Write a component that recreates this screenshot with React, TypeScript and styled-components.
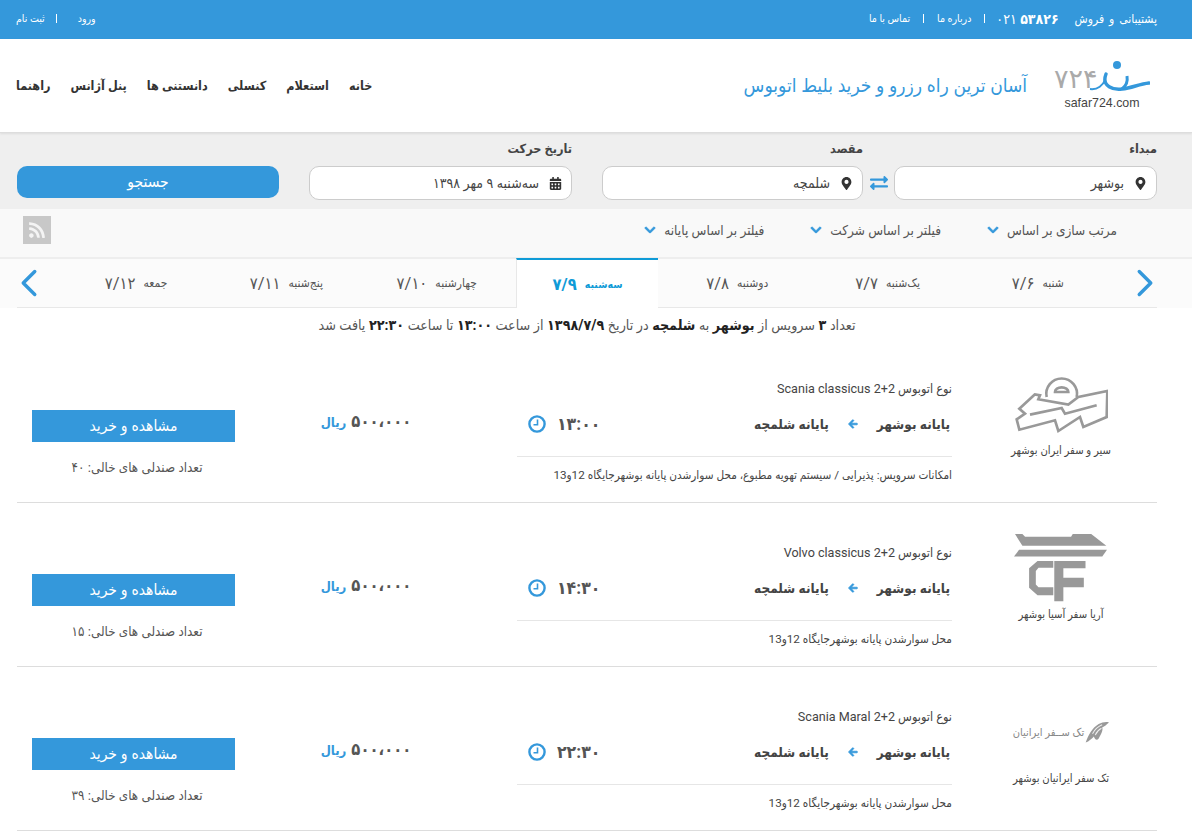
import React from "react";
import styled, { createGlobalStyle } from "styled-components";
import { FaCalendarAlt, FaChevronDown, FaExchangeAlt, FaMapMarkerAlt, FaRss, FaArrowLeft } from "react-icons/fa";
import { ChevronLeft, ChevronRight } from "lucide-react";

const BLUE = "#3498db";

const GlobalStyle = createGlobalStyle`
  * { box-sizing: border-box; }
  html, body { margin: 0; padding: 0; background: #fff; }
  body {
    font-family: Roboto, "DejaVu Sans Condensed", "DejaVu Sans", sans-serif;
    color: #555;
    overflow: hidden;
  }
`;

const Page = styled.div`
  direction: rtl;
  width: 1192px;
`;

const TopBar = styled.div`
  height: 39px;
  background: ${BLUE};
  color: #fff;
  font-size: 10.5px;
  display: flex;
  align-items: center;
  justify-content: space-between;
  padding: 0 35px 2px 16px;
`;

const TopGroup = styled.div`
  display: flex;
  align-items: center;
`;

const TopLink = styled.span`
  white-space: nowrap;
`;

const Support = styled.span`
  font-size: 12px;
  white-space: nowrap;
  word-spacing: 2px;
`;

const Phone = styled.span`
  direction: ltr;
  font-size: 14px;
  margin: 0 16px 0 -2px;
  white-space: nowrap;
  b { font-weight: 700; }
`;

const TopSep = styled.span<{ $wide?: boolean }>`
  width: 1px;
  height: 9px;
  background: #fff;
  margin: ${(p) => (p.$wide ? "0 21px 0 11px" : "0 13px")};
`;

const Header = styled.header`
  height: 94px;
  display: flex;
  align-items: center;
  padding: 0 42px 0 16px;
  border-bottom: 1px solid #ddd;
  box-shadow: 0 1px 2px rgba(0, 0, 0, 0.08);
  position: relative;
`;

const LogoBox = styled.div`
  width: 96px;
  height: 58px;
  display: flex;
  flex-direction: column;
  align-items: center;
  flex: none;
`;

const LogoText = styled.span`
  direction: ltr;
  font-family: "Liberation Sans", sans-serif;
  font-size: 12.4px;
  line-height: 14px;
  color: #444;
  margin-top: -5px;
`;

const Tagline = styled.div`
  margin-right: 27px;
  font-size: 19px;
  color: ${BLUE};
  white-space: nowrap;
`;

const Nav = styled.nav`
  margin-right: auto;
  display: flex;
  gap: 20px;
  font-size: 12.5px;
  font-weight: 700;
  color: #333;
  white-space: nowrap;
`;

const SearchBar = styled.section`
  height: 76px;
  background: #efefef;
  padding: 8px 35px 0 17px;
  display: grid;
  grid-template-columns: 263px 31px 261px 30px 263px 30px 262px;
  grid-template-rows: 25px 34px;
`;

const FieldLabel = styled.label<{ $col: number }>`
  grid-column: ${(p) => p.$col};
  grid-row: 1;
  font-size: 12.6px;
  font-weight: 700;
  color: #444;
  line-height: 16px;
`;

const Field = styled.div<{ $col: number }>`
  grid-column: ${(p) => p.$col};
  grid-row: 2;
  height: 34px;
  background: #fff;
  border: 1px solid #ccc;
  border-radius: 10px;
  display: flex;
  align-items: center;
  gap: 10px;
  padding: 0 9px;
  font-size: 14px;
  color: #444;
  svg { color: #333; font-size: 13px; flex: none; }
`;

const Swap = styled.div`
  grid-column: 2;
  grid-row: 2;
  display: flex;
  align-items: center;
  justify-content: center;
  color: ${BLUE};
  font-size: 18px;
`;

const SearchButton = styled.button`
  grid-column: 7;
  grid-row: 2;
  height: 32px;
  border: 0;
  border-radius: 10px;
  background: ${BLUE};
  color: #fff;
  font: inherit;
  font-size: 15.5px;
`;

const FilterBar = styled.section`
  height: 48px;
  background: #f9f9f9;
  display: flex;
  align-items: center;
  padding: 0 75px 0 23px;
  gap: 46px;
`;

const Filter = styled.div`
  display: flex;
  align-items: center;
  gap: 8px;
  font-size: 13.5px;
  color: #555;
  white-space: nowrap;
  margin-bottom: 6px;
  svg { color: ${BLUE}; font-size: 12px; stroke: currentColor; stroke-width: 30; }
`;

const RssBox = styled.div`
  margin-right: auto;
  width: 28px;
  height: 28px;
  margin-bottom: 6px;
  background: #c8c8c8;
  color: #f4f4f4;
  font-size: 18px;
  display: flex;
  align-items: center;
  justify-content: center;
`;

const TabsWrap = styled.section`
  height: 51px;
  border-top: 2px solid #eee;
  background: #fbfbfb;
  padding: 0 35px 0 17px;
`;

const TabsRow = styled.div`
  height: 49px;
  display: flex;
  align-items: stretch;
  border-bottom: 1px solid #e8e8e8;
`;

const ArrowBtn = styled.div`
  width: 24px;
  flex: none;
  display: flex;
  align-items: center;
  justify-content: center;
  color: ${BLUE};
  svg { flex: none; }
`;

const TabList = styled.div`
  flex: 1;
  display: grid;
  grid-template-columns: repeat(7, 1fr);
  margin: 0 20px;
`;

const Tab = styled.div<{ $active?: boolean }>`
  display: flex;
  align-items: center;
  justify-content: center;
  gap: 8px;
  white-space: nowrap;
  font-size: 12px;
  color: #555;
  ${(p) =>
    p.$active &&
    `
    margin: -1px 4px -1px 4px;
    background: #fff;
    border-top: 2px solid #0f9bd7;
    border-left: 1px solid #e8e8e8;
    color: #0f9bd7;
    font-weight: 700;
    font-size: 10.5px;
  `}
`;

const TabDate = styled.span<{ $active?: boolean }>`
  font-size: 16.5px;
  font-weight: ${(p) => (p.$active ? 700 : 400)};
`;

const Container = styled.main`
  margin: 0 35px 0 17px;
`;

const Summary = styled.p`
  margin: 0;
  height: 31px;
  padding-top: 8px;
  line-height: 18px;
  text-align: center;
  font-size: 14.2px;
  color: #555;
  b { color: #222; }
`;

const Row = styled.article`
  height: 164px;
  display: grid;
  grid-template-columns: 205px 435px 282px 218px;
  align-items: start;
  border-bottom: 1px solid #ddd;
`;

const CompanyCol = styled.div`
  padding-top: 34px;
  padding-left: 13px;
  display: flex;
  flex-direction: column;
  align-items: center;
  gap: 9px;
  font-size: 11.2px;
  color: #444;
  white-space: nowrap;
`;

const LogoSlot = styled.div`
  height: 62px;
  display: flex;
  align-items: center;
  justify-content: center;
`;

const SmallLogo = styled.div`
  display: flex;
  align-items: center;
  gap: 1px;
  color: #888;
  font-size: 11px;
  height: 62px;
`;

const InfoCol = styled.div`
  padding-top: 42px;
`;

const BusType = styled.div`
  font-size: 12.6px;
  line-height: 16px;
  color: #444;
`;

const RouteLine = styled.div`
  height: 60px;
  padding-top: 16px;
  display: flex;
  justify-content: space-between;
  align-items: flex-start;
  border-bottom: 1px solid #e6e6e6;
`;

const Route = styled.div`
  display: flex;
  align-items: center;
  gap: 19px;
  padding-right: 2px;
  font-size: 13.5px;
  line-height: 22px;
  font-weight: 700;
  color: #444;
  white-space: nowrap;
  svg { color: ${BLUE}; font-size: 10px; stroke: currentColor; stroke-width: 40; }
`;

const TimeBox = styled.div`
  display: flex;
  align-items: center;
  gap: 11px;
  padding-left: 11px;
  font-size: 17.5px;
  line-height: 22px;
  font-weight: 700;
  color: #555;
`;

const Facilities = styled.div`
  padding-top: 10px;
  font-size: 11.7px;
  line-height: 16px;
  color: #444;
`;

const PriceCol = styled.div`
  padding: 73px 20px 0 0;
  display: flex;
  justify-content: center;
  align-items: baseline;
  gap: 5px;
  font-size: 16.5px;
  font-weight: 700;
  color: #555;
  white-space: nowrap;
`;

const Rial = styled.span`
  color: ${BLUE};
  font-size: 13px;
`;

const BuyCol = styled.div`
  padding: 71px 0 0 15px;
  display: flex;
  flex-direction: column;
  align-items: center;
`;

const BuyButton = styled.button`
  width: 203px;
  height: 32px;
  border: 0;
  background: ${BLUE};
  color: #fff;
  font: inherit;
  font-size: 15.5px;
`;

const Seats = styled.div`
  margin-top: 17px;
  padding-left: 7px;
  font-size: 13.3px;
  line-height: 18px;
  color: #555;
`;

const ClockIcon = () => (
  <svg width="18" height="18" viewBox="0 0 18 18" fill="none" stroke={BLUE}>
    <circle cx="9" cy="9" r="7.6" strokeWidth="2.4" />
    <path d="M9.5 4.5 V9.8 H5.5" strokeWidth="1.6" />
  </svg>
);

const SeirLogo = () => (
  <svg width="94" height="59" viewBox="72 39 282 177" fill="none" stroke="#999" strokeWidth="8">
    <path d="M135 97 L88 140 L105 155 L80 172 L88 203 L195 175 L205 207 L270 165 L280 195 L350 165 L352 87 L265 105 L235 128 L145 112 L150 100 Z" />
    <path d="M120 158 L215 138 L225 155 L320 130" />
    <path d="M170 105 A46 46 0 1 1 260 105" />
    <path d="M195 90 a20 14 0 0 1 40 0 Z" />
  </svg>
);

const AryaLogo = () => (
  <svg width="94" height="68" viewBox="75 40 280 202" fill="#999">
    <path d="M78 40 H100 L108 48 H245 L250 40 H305 L350 75 H100 Z" />
    <path d="M90 87 H352 L338 107 H75 Z" />
    <path d="M145 120 H192 V140 H148 L140 150 V190 L148 198 H192 V222 H145 L120 200 V142 Z" />
    <path d="M195 120 H288 V142 H222 V170 H283 V198 H222 V240 H195 Z" />
  </svg>
);

const BirdLogo = () => (
  <svg width="24" height="23" viewBox="0 0 70 65">
    <path d="M2 62 C10 40 20 20 40 8 C50 3 60 1 70 3 C62 10 58 14 50 18 C54 24 46 40 40 50 C34 58 28 52 26 44 C20 50 12 58 2 62 Z" fill="#999" />
    <path d="M22 36 C28 24 36 16 50 10 M30 40 C34 30 40 24 48 20" fill="none" stroke="#eee" strokeWidth="3" />
  </svg>
);

const SiteLogo = () => (
  <svg width="96" height="44" viewBox="0 0 96 44">
    <text x="0" y="31" fontSize="27" fill="#aaa" fontFamily="'DejaVu Sans', sans-serif" direction="ltr">۷۲۴</text>
    <circle cx="63" cy="8" r="4" fill={BLUE} />
    <path d="M52 17 C47 30 60 33 68 32 C78 31 85 27 95 26" fill="none" stroke={BLUE} strokeWidth="3.4" strokeLinecap="round" />
    <path d="M73 19 C74 25 72 29 68 32" fill="none" stroke={BLUE} strokeWidth="3" />
    <path d="M36 32 C44 33 49 28 51 23" fill="none" stroke={BLUE} strokeWidth="2" />
  </svg>
);

const tabs = [
  { day: "شنبه", date: "۷/۶" },
  { day: "یک‌شنبه", date: "۷/۷" },
  { day: "دوشنبه", date: "۷/۸" },
  { day: "سه‌شنبه", date: "۷/۹", active: true },
  { day: "چهارشنبه", date: "۷/۱۰" },
  { day: "پنج‌شنبه", date: "۷/۱۱" },
  { day: "جمعه", date: "۷/۱۲" },
];

const services = [
  {
    logo: <SeirLogo />,
    company: "سیر و سفر ایران بوشهر",
    bus: "نوع اتوبوس Scania classicus 2+2",
    time: "۱۳:۰۰",
    facilities: "امکانات سرویس: پذیرایی / سیستم تهویه مطبوع، محل سوارشدن پایانه بوشهرجایگاه 12و13",
    seats: "۴۰",
  },
  {
    logo: <AryaLogo />,
    company: "آریا سفر آسیا بوشهر",
    bus: "نوع اتوبوس Volvo classicus 2+2",
    time: "۱۴:۳۰",
    facilities: "محل سوارشدن پایانه بوشهرجایگاه 12و13",
    seats: "۱۵",
  },
  {
    logo: (
      <SmallLogo>
        <BirdLogo />
        <span>تک ســفر ایرانیان</span>
      </SmallLogo>
    ),
    company: "تک سفر ایرانیان بوشهر",
    bus: "نوع اتوبوس Scania Maral 2+2",
    time: "۲۲:۳۰",
    facilities: "محل سوارشدن پایانه بوشهرجایگاه 12و13",
    seats: "۳۹",
  },
];

const App = () => (
  <Page>
    <GlobalStyle />
    <TopBar>
      <TopGroup>
        <Support>پشتیبانی و فروش</Support>
        <Phone>
          ۰۲۱ <b>۵۳۸۲۶</b>
        </Phone>
        <TopSep />
        <TopLink>درباره ما</TopLink>
        <TopSep />
        <TopLink>تماس با ما</TopLink>
      </TopGroup>
      <TopGroup>
        <TopLink>ورود</TopLink>
        <TopSep $wide />
        <TopLink>ثبت نام</TopLink>
      </TopGroup>
    </TopBar>

    <Header>
      <LogoBox>
        <SiteLogo />
        <LogoText>safar724.com</LogoText>
      </LogoBox>
      <Tagline>آسان ترین راه رزرو و خرید بلیط اتوبوس</Tagline>
      <Nav>
        <span>خانه</span>
        <span>استعلام</span>
        <span>کنسلی</span>
        <span>دانستنی ها</span>
        <span>پنل آژانس</span>
        <span>راهنما</span>
      </Nav>
    </Header>

    <SearchBar>
      <FieldLabel $col={1}>مبداء</FieldLabel>
      <Field $col={1}>
        <FaMapMarkerAlt />
        <span>بوشهر</span>
      </Field>
      <Swap>
        <FaExchangeAlt />
      </Swap>
      <FieldLabel $col={3}>مقصد</FieldLabel>
      <Field $col={3}>
        <FaMapMarkerAlt />
        <span>شلمچه</span>
      </Field>
      <FieldLabel $col={5}>تاریخ حرکت</FieldLabel>
      <Field $col={5}>
        <FaCalendarAlt />
        <span>سه‌شنبه ۹ مهر ۱۳۹۸</span>
      </Field>
      <SearchButton>جستجو</SearchButton>
    </SearchBar>

    <FilterBar>
      <Filter>
        مرتب سازی بر اساس <FaChevronDown />
      </Filter>
      <Filter>
        فیلتر بر اساس شرکت <FaChevronDown />
      </Filter>
      <Filter>
        فیلتر بر اساس پایانه <FaChevronDown />
      </Filter>
      <RssBox>
        <FaRss />
      </RssBox>
    </FilterBar>

    <TabsWrap>
      <TabsRow>
        <ArrowBtn>
          <ChevronRight size={46} strokeWidth={1.8} />
        </ArrowBtn>
        <TabList>
          {tabs.map((t) => (
            <Tab key={t.day} $active={t.active}>
              <span>{t.day}</span>
              <TabDate $active={t.active}>{t.date}</TabDate>
            </Tab>
          ))}
        </TabList>
        <ArrowBtn>
          <ChevronLeft size={46} strokeWidth={1.8} />
        </ArrowBtn>
      </TabsRow>
    </TabsWrap>

    <Container>
      <Summary>
        تعداد <b>۳</b> سرویس از <b>بوشهر</b> به <b>شلمچه</b> در تاریخ <b>۱۳۹۸/۷/۹</b> از ساعت <b>۱۳:۰۰</b> تا ساعت{" "}
        <b>۲۲:۳۰</b> یافت شد
      </Summary>
      {services.map((s) => (
        <Row key={s.company}>
          <CompanyCol>
            <LogoSlot>{s.logo}</LogoSlot>
            <span>{s.company}</span>
          </CompanyCol>
          <InfoCol>
            <BusType>{s.bus}</BusType>
            <RouteLine>
              <Route>
                <span>پایانه بوشهر</span>
                <FaArrowLeft />
                <span>پایانه شلمچه</span>
              </Route>
              <TimeBox>
                <span>{s.time}</span>
                <ClockIcon />
              </TimeBox>
            </RouteLine>
            <Facilities>{s.facilities}</Facilities>
          </InfoCol>
          <PriceCol>
            <span>۵۰۰،۰۰۰</span>
            <Rial>ریال</Rial>
          </PriceCol>
          <BuyCol>
            <BuyButton>مشاهده و خرید</BuyButton>
            <Seats>تعداد صندلی های خالی: {s.seats}</Seats>
          </BuyCol>
        </Row>
      ))}
    </Container>
  </Page>
);

export default App;
